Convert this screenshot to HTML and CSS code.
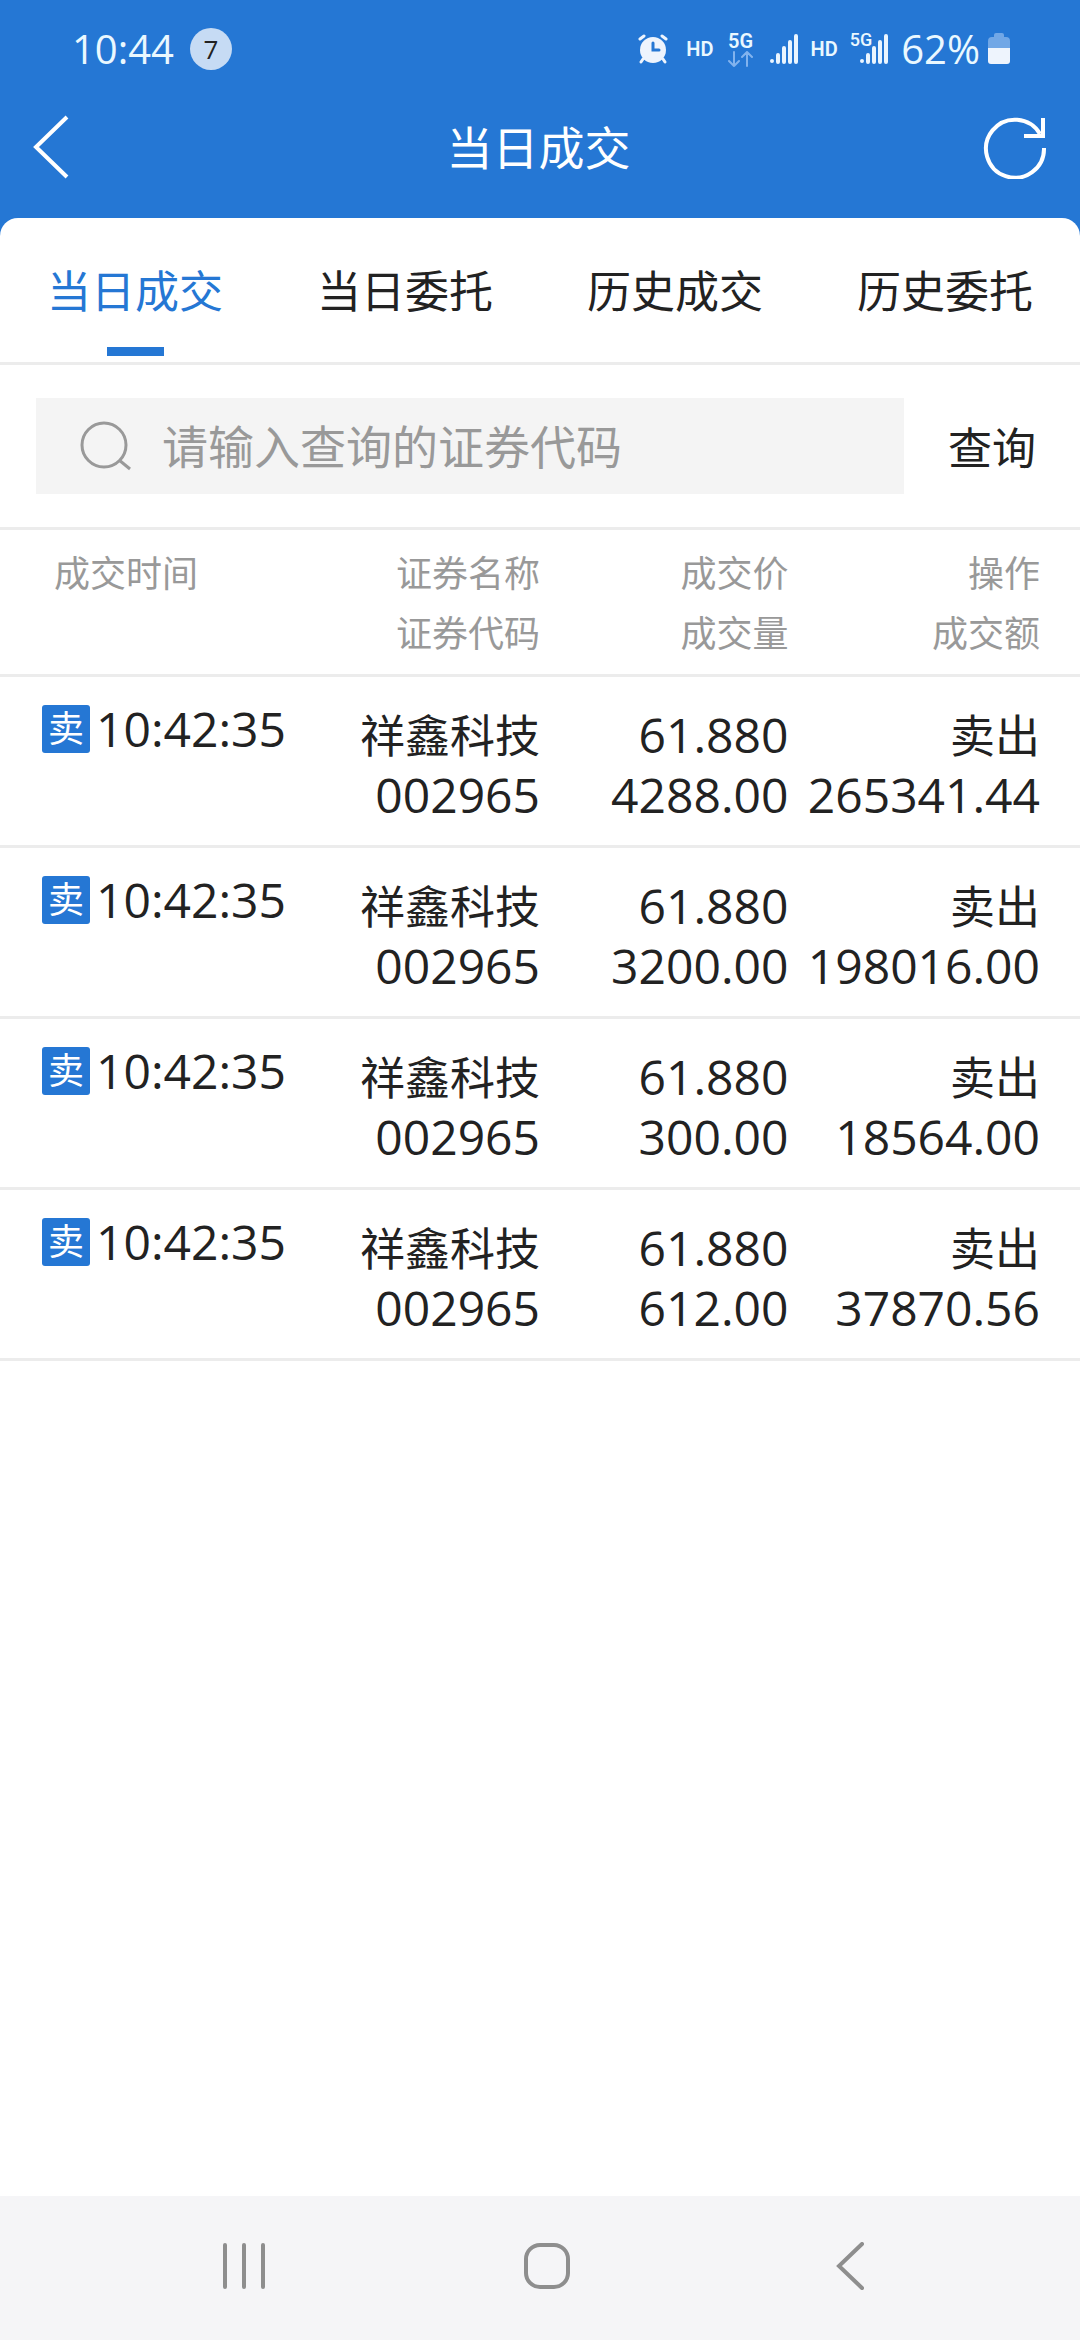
FILE: index.html
```html
<!DOCTYPE html>
<html lang="zh-CN">
<head>
<meta charset="utf-8">
<meta name="viewport" content="width=device-width, initial-scale=1">
<title>当日成交</title>
<link rel="stylesheet" href="styles.css">
</head>
<body>
<div class="app">
  <div class="status-bar">
    <span class="clock">10:44</span>
    <span class="notice-count">7</span>
    <div class="status-icons">
      <svg class="alarm" width="30" height="30" viewBox="0 0 30 30" fill="#eef4fd" stroke="#eef4fd" stroke-linecap="round">
        <circle cx="15" cy="16" r="13" stroke="none"/>
        <path d="M2 5l4-3M28 5l-4-3M5 25l-2 3M25 25l2 3" stroke-width="3"/>
        <path d="M15 9v7h6" fill="none" stroke="#2577d4" stroke-width="3"/>
      </svg>
      <span class="hd">HD</span>
      <div class="network">
        <span class="net-label">5G</span>
        <svg width="26" height="16" viewBox="0 0 26 16" fill="none" stroke="#82b3ee" stroke-width="2" stroke-linecap="round" stroke-linejoin="round">
          <path d="M6 1v14M1 10l5 5 5-5M19 15V1M14 6l5-5 5 5"/>
        </svg>
      </div>
      <svg class="signal" width="30" height="30" viewBox="0 0 30 30" stroke="#eaf5ff" stroke-width="4" stroke-linecap="round">
        <path d="M3 27v0M9 21v7M15 14v14M21 8v20M27 2v26"/>
      </svg>
      <span class="hd">HD</span>
      <div class="network-second">
        <span class="net-label-small">5G</span>
        <svg width="30" height="30" viewBox="0 0 30 30" stroke="#eaf5ff" stroke-width="4" stroke-linecap="round">
          <path d="M3 27v0M9 21v7M15 14v14M21 8v20M27 2v26"/>
        </svg>
      </div>
      <span class="battery-level">62%</span>
      <svg width="22" height="32" viewBox="0 0 22 32">
        <path d="M6 2q0-2 2-2h6q2 0 2 2v2h2q4 0 4 4v8H0V8q0-4 4-4h2z" fill="#71a7e6"/>
        <path d="M0 15h22v13q0 3-3 3H3q-3 0-3-3z" fill="#eef4fd"/>
      </svg>
    </div>
  </div>

  <header class="title-bar">
    <button class="icon-button" type="button" aria-label="返回">
      <svg width="40" height="64" viewBox="0 0 40 64" fill="none" stroke="#fff" stroke-width="4"><path d="M37 2L6 32l31 30"/></svg>
    </button>
    <h1 class="title">当日成交</h1>
    <button class="icon-button" type="button" aria-label="刷新">
      <svg width="64" height="64" viewBox="0 0 64 64" fill="none" stroke="#fff" stroke-width="4"><path d="M61 33A29 29 0 1 1 57 19"/><path d="M60 3v18H41"/></svg>
    </button>
  </header>

  <main class="sheet">
    <nav class="tabs">
      <a class="tab tab-active" href="#today-deals" aria-current="page">当日成交</a>
      <a class="tab" href="#today-orders">当日委托</a>
      <a class="tab" href="#past-deals">历史成交</a>
      <a class="tab" href="#past-orders">历史委托</a>
    </nav>

    <form class="search">
      <label class="search-box">
        <svg width="52" height="50" viewBox="0 0 52 50" fill="none" stroke="#999" stroke-width="3"><circle cx="24" cy="24" r="22"/><path d="M39 39l11 9"/></svg>
        <input class="search-input" type="text" placeholder="请输入查询的证券代码" aria-label="证券代码">
      </label>
      <button class="search-button" type="submit">查询</button>
    </form>

    <table class="deals">
      <colgroup><col class="col-time"><col class="col-name"><col class="col-price"><col class="col-amount"></colgroup>
      <thead>
        <tr><th>成交时间</th><th>证券名称<br>证券代码</th><th>成交价<br>成交量</th><th>操作<br>成交额</th></tr>
      </thead>
      <tbody>
        <tr><td><div class="time"><span class="side">卖</span>10:42:35</div></td><td><span class="word">祥鑫科技</span><br>002965</td><td>61.880<br>4288.00</td><td><span class="word">卖出</span><br>265341.44</td></tr>
        <tr><td><div class="time"><span class="side">卖</span>10:42:35</div></td><td><span class="word">祥鑫科技</span><br>002965</td><td>61.880<br>3200.00</td><td><span class="word">卖出</span><br>198016.00</td></tr>
        <tr><td><div class="time"><span class="side">卖</span>10:42:35</div></td><td><span class="word">祥鑫科技</span><br>002965</td><td>61.880<br>300.00</td><td><span class="word">卖出</span><br>18564.00</td></tr>
        <tr><td><div class="time"><span class="side">卖</span>10:42:35</div></td><td><span class="word">祥鑫科技</span><br>002965</td><td>61.880<br>612.00</td><td><span class="word">卖出</span><br>37870.56</td></tr>
      </tbody>
    </table>
  </main>

  <div class="system-nav">
    <button class="nav-button" type="button" aria-label="最近任务">
      <svg width="48" height="48" viewBox="0 0 48 48" fill="none" stroke="#8e8e8e" stroke-width="4" stroke-linecap="round"><path d="M5 3v42M24 3v42M43 3v42"/></svg>
    </button>
    <button class="nav-button" type="button" aria-label="主屏幕">
      <svg width="48" height="48" viewBox="0 0 48 48" fill="none" stroke="#8e8e8e" stroke-width="4"><rect x="3" y="3" width="42" height="42" rx="14"/></svg>
    </button>
    <button class="nav-button" type="button" aria-label="返回上一页">
      <svg width="48" height="48" viewBox="0 0 48 48" fill="none" stroke="#8e8e8e" stroke-width="4" stroke-linecap="round"><path d="M36 2L13 24l23 22"/></svg>
    </button>
  </div>
</div>
</body>
</html>
```

FILE: styles.css
```css
* {
  box-sizing: border-box;
}

body {
  margin: 0;
  color: #222;
  font-family: "Open Sans", "Noto Sans CJK SC", sans-serif;
  font-size: 44px;
}

button,
input {
  margin: 0;
  padding: 0;
  border: 0;
  background: none;
  color: inherit;
  font: inherit;
}

svg {
  display: block;
  flex: none;
}

.app {
  display: flex;
  flex-direction: column;
  min-height: 100vh;
  background: #2577d4;
}

/* status bar */
.status-bar {
  display: flex;
  align-items: center;
  height: 98px;
  padding: 0 70px 0 72px;
  color: #eaf8ff;
}

.clock,
.battery-level {
  font-size: 40px;
  line-height: 48px;
}

.notice-count {
  width: 42px;
  height: 42px;
  margin-left: 16px;
  border-radius: 50%;
  background: #c6dbf4;
  color: #222;
  font-size: 26px;
  line-height: 42px;
  text-align: center;
}

.status-icons {
  display: flex;
  align-items: center;
  margin-left: auto;
}

.alarm {
  margin-right: 18px;
}

.hd,
.net-label {
  font-family: Roboto, sans-serif;
  font-size: 20px;
  font-weight: 600;
  line-height: 20px;
}

.network {
  display: flex;
  flex-direction: column;
  align-items: center;
  margin: 0 15px 0 14px;
}

.signal {
  margin-right: 12px;
}

.network-second {
  display: flex;
  align-items: flex-start;
  margin: 0 12px;
}

.network-second svg {
  margin-left: -13px;
}

.net-label-small {
  font-family: Roboto, sans-serif;
  font-size: 18px;
  font-weight: 500;
  line-height: 12px;
}

.battery-level {
  margin-right: 8px;
}

/* title bar */
.title-bar {
  display: flex;
  align-items: center;
  justify-content: space-between;
  height: 120px;
  padding: 0 33px 22px 30px;
  color: #fff;
}

.icon-button {
  display: flex;
  width: 64px;
}

.title {
  margin: 0;
  font-size: 46px;
  font-weight: 400;
  line-height: 60px;
}

/* content sheet */
.sheet {
  flex: 1;
  border-radius: 18px 18px 0 0;
  background: #fff;
}

.tabs {
  display: grid;
  grid-template-columns: repeat(4, 1fr);
  height: 147px;
  padding-top: 43px;
  border-bottom: 3px solid #ececec;
}

.tab {
  color: inherit;
  line-height: 60px;
  text-align: center;
  text-decoration: none;
}

.tab-active {
  color: #2577d4;
}

.tab-active::after {
  content: "";
  display: block;
  width: 57px;
  height: 9px;
  margin: 26px auto 0;
  background: #2577d4;
}

.search {
  display: flex;
  align-items: center;
  padding: 33px 0 33px 36px;
  border-bottom: 3px solid #ececec;
}

.search-box {
  display: flex;
  flex: 1;
  align-items: center;
  gap: 30px;
  height: 96px;
  padding-left: 44px;
  background: #f4f4f4;
}

.search-input {
  flex: 1;
  min-width: 0;
  height: 96px;
  outline: 0;
  font-size: 46px;
}

.search-input::placeholder {
  color: #999;
  opacity: 1;
}

.search-button {
  width: 176px;
  height: 96px;
}

/* deals table */
.deals {
  width: 100%;
  border-collapse: separate;
  border-spacing: 0;
  table-layout: fixed;
}

.col-time {
  width: 30%;
}

.col-name {
  width: 20%;
}

.col-price {
  width: 23%;
}

.deals th,
.deals td {
  border-bottom: 3px solid #ececec;
  line-height: 60px;
  text-align: right;
  vertical-align: top;
}

.deals th {
  padding: 14px 0 10px;
  color: #999;
  font-size: 36px;
  font-weight: 400;
}

.deals td {
  padding: 28px 0 20px;
  font-size: 48px;
}

.word {
  font-size: 45px;
  line-height: 48px;
}

.deals th:first-child {
  padding-left: 54px;
  text-align: left;
}

.deals td:first-child {
  padding-left: 42px;
}

.deals th:last-child,
.deals td:last-child {
  padding-right: 40px;
}

.time {
  display: flex;
  align-items: center;
  gap: 6px;
  line-height: 48px;
}

.side {
  width: 48px;
  height: 48px;
  border-radius: 3px;
  background: #2577d4;
  color: #fff;
  font-size: 36px;
  text-align: center;
}

/* system navigation */
.system-nav {
  display: grid;
  grid-template-columns: repeat(3, 1fr);
  height: 144px;
  padding: 0 78px 4px 92px;
  background: #f5f5f7;
}

.nav-button {
  display: flex;
  align-items: center;
  justify-content: center;
}
```
